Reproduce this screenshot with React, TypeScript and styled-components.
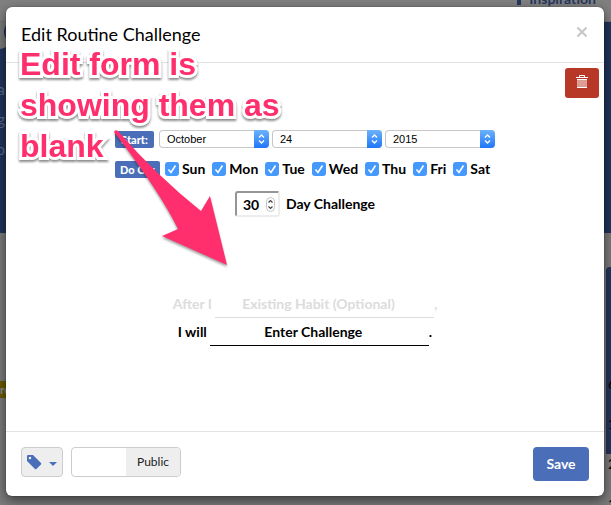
import React from "react";
import styled, { createGlobalStyle } from "styled-components";

const GlobalStyle = createGlobalStyle`
  * { box-sizing: border-box; }
  body { margin: 0; background: #7b7b7b; overflow: hidden; }
  body, button, input, select { font-family: Lato, "Liberation Sans", sans-serif; color: #000; }
`;

const Page = styled.div`
  position: relative;
  min-height: 100vh;
  padding: 7px 7px 9px 6px;
  overflow: hidden;
`;

const Backdrop = styled.div`
  position: absolute;
  inset: 0;
  overflow: hidden;
  font-size: 14px;
`;

const TopBar = styled.div`
  height: 22px;
  background: #808080;
  border-bottom: 1px solid #747474;
`;

const Hero = styled.div`
  height: 211px;
  background: #22345c;
`;

const Avatar = styled.div`
  position: absolute;
  left: 0;
  top: 22px;
  width: 10px;
  height: 27px;
  background: #7b7b7b;
  border-radius: 0 0 10px 0;
  overflow: hidden;

  &::before {
    content: "";
    position: absolute;
    left: 4px;
    top: -2px;
    width: 24px;
    height: 24px;
    border-radius: 50%;
    background: #22345c;
  }
`;

const NavLink = styled.a`
  position: absolute;
  right: 15px;
  top: -10px;
  display: flex;
  align-items: center;
  gap: 4px;
  font-weight: 700;
  font-size: 14px;
  line-height: 17px;
  color: #24375f;
  text-decoration: none;
`;

const SideText = styled.div`
  position: absolute;
  right: calc(100% - 5px);
  top: 74px;
  font-size: 16px;
  line-height: 30px;
  text-align: right;
  color: #596988;
`;

const Badge = styled.div`
  position: absolute;
  left: 0;
  top: 381px;
  font-size: 12px;
  line-height: 17px;
  font-weight: 700;
  background: #6b5900;
  color: #8c8c8c;
`;

const SidePanel = styled.div`
  position: absolute;
  left: calc(100% - 5px);
  top: 267px;
  width: 60px;
  height: 187px;
  border-radius: 4px 0 0 0;
  background: #22345c;
`;

const Figures = styled.div`
  position: absolute;
  left: calc(100% - 3px);
  top: 364px;
  line-height: 40px;
`;

const Modal = styled.main`
  position: relative;
  display: flex;
  flex-direction: column;
  min-height: calc(100vh - 16px);
  background: #fff;
  border-radius: 6px;
  box-shadow: 0 4px 12px rgba(0, 0, 0, 0.55), 0 0 1px #333;
`;

const Header = styled.header`
  display: flex;
  align-items: center;
  justify-content: space-between;
  height: 56px;
  padding: 0 15px 2px;
  border-bottom: 1px solid #e2e2e2;
`;

const Title = styled.h1`
  margin: 0;
  font-size: 18px;
  line-height: 24px;
  font-weight: 400;
`;

const CloseButton = styled.button`
  display: grid;
  place-items: center;
  width: 14px;
  height: 20px;
  margin-bottom: 4px;
  padding: 0;
  border: 0;
  background: none;
`;

const Body = styled.form`
  flex: 1;
  display: flex;
  flex-direction: column;
  align-items: center;
  padding: 5px;
`;

const DeleteButton = styled.button`
  align-self: flex-end;
  display: grid;
  place-items: center;
  width: 34px;
  height: 30px;
  padding: 0 0 2px;
  border: 0;
  border-radius: 3px;
  background: #b83828;
`;

const Row = styled.div<{ $top: number }>`
  display: flex;
  align-items: center;
  margin-top: ${(p) => p.$top}px;
  font-size: 14px;
  line-height: 18px;
  font-weight: 700;
`;

const Schedule = styled.div`
  display: flex;
  flex-direction: column;
  align-items: flex-start;
`;

const Tag = styled.span<{ $width: number }>`
  width: ${(p) => p.$width}px;
  margin-right: 5px;
  border-radius: 2px;
  background: #4a6fb8;
  color: #fff;
  font-size: 11px;
  line-height: 17px;
  font-weight: 900;
  text-align: center;
  white-space: nowrap;
`;

const SelectBox = styled.span`
  display: grid;
  grid-template-columns: 1fr 15px;
  width: 110px;
  height: 18px;
  border-radius: 4px;
  overflow: hidden;
  box-shadow: inset 0 0 0 1px #c8c8c8;

  & + & { margin-left: 3px; }
`;

const Select = styled.select`
  grid-area: 1 / 1 / 2 / 3;
  width: 100%;
  padding: 0 18px 0 8px;
  border: 0;
  background: none;
  appearance: none;
  font-family: "Liberation Sans", sans-serif;
  font-size: 11px;
`;

const Stepper = styled.span`
  grid-area: 1 / 2;
  display: grid;
  place-items: center;
  background: linear-gradient(#6cb2fc, #1f76f9);
  pointer-events: none;
`;

const Days = styled.div`
  display: flex;
  gap: 7px;
`;

const Day = styled.label`
  display: grid;
  grid-template-columns: 14px auto;
  column-gap: 3px;
  align-items: center;
`;

const Check = styled.input`
  grid-area: 1 / 1;
  appearance: none;
  width: 14px;
  height: 14px;
  margin: 0;
  border-radius: 3px;
  background: #4598fc;
`;

const CheckMark = styled.svg`
  grid-area: 1 / 1;
  position: relative;
  pointer-events: none;
  opacity: 0;

  input:checked + & { opacity: 1; }
`;

const NumberBox = styled.span`
  display: flex;
  align-items: center;
  width: 45px;
  height: 26px;
  margin-right: 6px;
  padding-left: 6px;
  border: 2px solid;
  border-color: #959595 #ededed #ededed #959595;
  border-radius: 3px;
`;

const NumberInput = styled.input`
  width: 23px;
  padding: 0;
  border: 0;
  outline: 0;
  font-size: 14px;
  font-weight: 700;
  appearance: textfield;

  &::-webkit-inner-spin-button { appearance: none; }
`;

const Sentence = styled(Row)<{ $muted?: boolean }>`
  height: 28px;
  color: ${(p) => (p.$muted ? "#dcdcdc" : "#000")};
`;

const LineInput = styled.input<{ $muted?: boolean }>`
  width: 219px;
  height: 28px;
  margin-left: 3px;
  padding: 0 12px 0 0;
  border: 0;
  border-bottom: 1px solid ${(p) => (p.$muted ? "#dcdcdc" : "#000")};
  outline: 0;
  font-size: 14px;
  font-weight: 700;
  text-align: center;

  &::placeholder { color: ${(p) => (p.$muted ? "#dcdcdc" : "#000")}; }
`;

const Footer = styled.footer`
  display: flex;
  align-items: flex-start;
  gap: 8px;
  padding: 15px;
  border-top: 1px solid #e2e2e2;
`;

const TagButton = styled.button`
  display: flex;
  align-items: center;
  justify-content: space-between;
  width: 42px;
  height: 30px;
  padding: 0 5px 0 4px;
  border: 1px solid #ccc;
  border-radius: 4px;
  background: #eee;
`;

const Toggle = styled.button`
  display: grid;
  grid-template-columns: 1fr 1fr;
  width: 110px;
  height: 30px;
  padding: 0;
  border: 1px solid #ccc;
  border-radius: 4px;
  background: #fff;
  overflow: hidden;
  font-size: 12px;
  line-height: 28px;

  span { grid-column: 2; background: #eee; color: #222; }
`;

const SaveButton = styled.button`
  width: 56px;
  height: 34px;
  margin-left: auto;
  padding: 0 0 2px;
  border: 0;
  border-radius: 4px;
  background: #4a6fb8;
  color: #fff;
  font-size: 14px;
  font-weight: 700;
`;

const Note = styled.div`
  position: absolute;
  left: 20px;
  top: 44px;
  font: 700 32px/41px "Liberation Sans", sans-serif;
  color: #ff2f6d;
  white-space: pre;
  -webkit-text-stroke: 6px #fff;
  paint-order: stroke fill;
  filter: drop-shadow(0 2px 1px rgba(0, 0, 0, 0.45));
  pointer-events: none;
`;

const Arrow = styled.svg`
  position: absolute;
  left: 110px;
  top: 125px;
  filter: drop-shadow(0 2px 1px rgba(0, 0, 0, 0.35));
  pointer-events: none;
`;

const dates = [
  { label: "Month", value: "October" },
  { label: "Day", value: "24" },
  { label: "Year", value: "2015" },
];
const days = ["Sun", "Mon", "Tue", "Wed", "Thu", "Fri", "Sat"];

export default function App() {
  return (
    <Page>
      <GlobalStyle />
      <Backdrop aria-hidden="true">
        <TopBar />
        <Hero />
        <Avatar />
        <NavLink href="#inspiration" tabIndex={-1}>
          <svg width="13" height="13" viewBox="0 0 13 13">
            <path d="M5 0h4v5h4v3H9v5H5V8H0V5h5z" fill="#24375f" />
          </svg>
          Inspiration
        </NavLink>
        <SideText>a<br />g<br />o</SideText>
        <Badge>ro</Badge>
        <SidePanel />
        <Figures>6<br />1<br />2<br />1</Figures>
      </Backdrop>

      <Modal role="dialog" aria-labelledby="dialog-title">
        <Header>
          <Title id="dialog-title">Edit Routine Challenge</Title>
          <CloseButton type="button" aria-label="Close">
            <svg width="12" height="12" viewBox="0 0 12 12">
              <path d="M1.500 1.500l9 9M10.500 1.500l-9 9" stroke="#c8c8c8" strokeWidth="2.200" />
            </svg>
          </CloseButton>
        </Header>

        <Body id="challenge">
          <DeleteButton type="button" aria-label="Delete">
            <svg width="12" height="14" viewBox="0 0 12 14">
              <path d="M1 4h10v9H1z" fill="#dd9c94" />
              <path d="M0 2h12v1H0zM1 4h10v1H1zM1 12h10v1H1z" fill="#fff" />
              <path d="M3.500 2V.5h5V2" fill="none" stroke="#fff" />
            </svg>
          </DeleteButton>

          <Schedule>
            <Row $top={32}>
              <Tag $width={39}>Start:</Tag>
              {dates.map((d) => (
                <SelectBox key={d.label}>
                  <Select aria-label={d.label} defaultValue={d.value}>
                    <option>{d.value}</option>
                  </Select>
                  <Stepper>
                    <svg width="7" height="12" viewBox="0 0 7 12">
                      <path d="M1 4.500L3.500 2 6 4.500M1 7.500L3.500 10 6 7.500" fill="none" stroke="#fff" strokeWidth="1.300" />
                    </svg>
                  </Stepper>
                </SelectBox>
              ))}
            </Row>
            <Row $top={12}>
              <Tag $width={45}>Do On:</Tag>
              <Days>
                {days.map((day) => (
                  <Day key={day}>
                    <Check type="checkbox" defaultChecked />
                    <CheckMark width="14" height="14" viewBox="0 0 14 14">
                      <path d="M3.500 7.500L6 10.500 10.500 3.500" fill="none" stroke="#fff" strokeWidth="1.600" />
                    </CheckMark>
                    {day}
                  </Day>
                ))}
              </Days>
            </Row>
          </Schedule>

          <Row $top={13}>
            <NumberBox>
              <NumberInput id="length" type="number" defaultValue={30} />
              <svg width="9" height="15" viewBox="0 0 9 15">
                <rect x=".5" y=".5" width="8" height="14" rx="4" fill="#fff" stroke="#c4c4c4" />
                <path d="M2.500 5.500l2-2 2 2M2.500 9.500l2 2 2-2" fill="none" stroke="#444" strokeWidth="1.200" />
              </svg>
            </NumberBox>
            <label htmlFor="length">Day Challenge</label>
          </Row>

          <Sentence $top={73} $muted>
            <label htmlFor="habit">After I</label>
            <LineInput id="habit" $muted placeholder="Existing Habit (Optional)" />,
          </Sentence>
          <Sentence $top={0}>
            <label htmlFor="task">I will</label>
            <LineInput id="task" placeholder="Enter Challenge" />.
          </Sentence>
        </Body>

        <Footer>
          <TagButton type="button" aria-label="Tags">
            <svg width="16" height="16" viewBox="0 0 16 16">
              <path fillRule="evenodd" d="M1 2q0-1 1-1h5l8 8q.7.700 0 1.400L10.400 15q-.7.700-1.400 0L1 7zM4 2.700a1.300 1.300 0 100 2.600 1.300 1.300 0 000-2.600z" fill="#4a6fb8" />
            </svg>
            <svg width="8" height="10" viewBox="0 0 8 10">
              <path d="M0 5h8L4 9z" fill="#4a6fb8" />
            </svg>
          </TagButton>
          <Toggle type="button">
            <span>Public</span>
          </Toggle>
          <SaveButton form="challenge" type="button">Save</SaveButton>
        </Footer>
      </Modal>

      <Note>{"Edit form is\nshowing them as\nblank"}</Note>
      <Arrow width="122" height="145" viewBox="110 125 122 145" aria-hidden="true">
        <path d="M114 132Q115 129 118 131Q156 175 201 211L210 196L227 265L162 236L178 229Q160 192 114 132Z" fill="#ff2f6d" />
      </Arrow>
    </Page>
  );
}
